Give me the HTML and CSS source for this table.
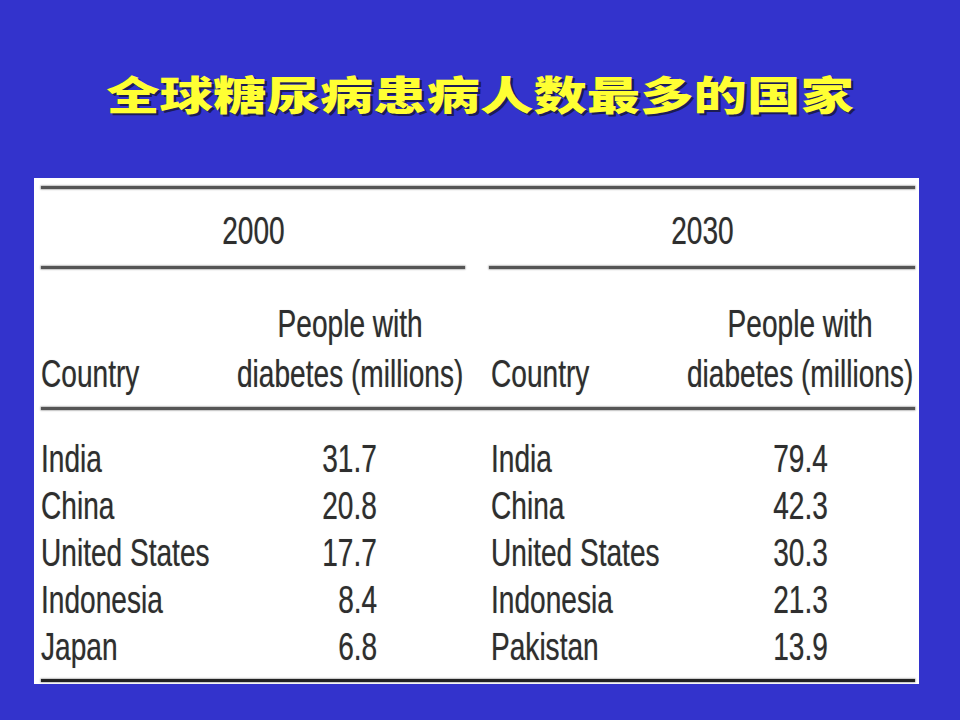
FILE: index.html
```html
<!DOCTYPE html>
<html lang="zh-CN">
<head>
<meta charset="utf-8">
<title>全球糖尿病患病人数最多的国家</title>
<link rel="stylesheet" href="styles.css">
</head>
<body>
<div class="slide">
  <h1 class="title"><span class="title-text">全球糖尿病患病人数最多的国家</span></h1>
  <div class="sheet">
    <div class="rule rule-top"></div>
    <div class="halves">
      <div class="half half-left">
        <div class="year"><span class="sx c">2000</span></div>
        <div class="rule rule-year"></div>
        <div class="head">
          <div class="cell country"><span class="sx l">Country</span></div>
          <div class="cell hval"><span class="sx c">People with<br>diabetes (millions)</span></div>
        </div>
      </div>
      <div class="half half-right">
        <div class="year"><span class="sx c">2030</span></div>
        <div class="rule rule-year"></div>
        <div class="head">
          <div class="cell country"><span class="sx l">Country</span></div>
          <div class="cell hval"><span class="sx c">People with<br>diabetes (millions)</span></div>
        </div>
      </div>
    </div>
    <div class="rule rule-mid"></div>
    <div class="halves body-rows">
      <div class="half half-left">
        <div class="row"><div class="country"><span class="sx l">India</span></div><div class="num"><span class="sx r">31.7</span></div></div>
        <div class="row"><div class="country"><span class="sx l">China</span></div><div class="num"><span class="sx r">20.8</span></div></div>
        <div class="row"><div class="country"><span class="sx l">United States</span></div><div class="num"><span class="sx r">17.7</span></div></div>
        <div class="row"><div class="country"><span class="sx l">Indonesia</span></div><div class="num"><span class="sx r">8.4</span></div></div>
        <div class="row"><div class="country"><span class="sx l">Japan</span></div><div class="num"><span class="sx r">6.8</span></div></div>
      </div>
      <div class="half half-right">
        <div class="row"><div class="country"><span class="sx l">India</span></div><div class="num"><span class="sx r">79.4</span></div></div>
        <div class="row"><div class="country"><span class="sx l">China</span></div><div class="num"><span class="sx r">42.3</span></div></div>
        <div class="row"><div class="country"><span class="sx l">United States</span></div><div class="num"><span class="sx r">30.3</span></div></div>
        <div class="row"><div class="country"><span class="sx l">Indonesia</span></div><div class="num"><span class="sx r">21.3</span></div></div>
        <div class="row"><div class="country"><span class="sx l">Pakistan</span></div><div class="num"><span class="sx r">13.9</span></div></div>
      </div>
    </div>
    <div class="rule rule-bottom"></div>
  </div>
</div>
</body>
</html>
```

FILE: styles.css
```css
html, body {
  margin: 0;
  padding: 0;
}
body {
  width: 960px;
  height: 720px;
  background: #3333cc;
  overflow: hidden;
}
.slide {
  width: 960px;
  height: 720px;
  padding-top: 73px;
  box-sizing: border-box;
}
.title {
  margin: 0;
  height: 40px;
  line-height: 40px;
  text-align: center;
  font-family: "Noto Sans CJK SC", "Noto Sans CJK TC", sans-serif;
  font-weight: 900;
  font-size: 40px;
  color: #ffff33;
}
.title-text {
  display: inline-block;
  transform: scaleX(1.335);
  transform-origin: 50% 50%;
  text-shadow: 2px 2px 0 #1c1c55;
}
.sheet {
  margin-top: 65px;
  margin-left: 34px;
  width: 885px;
  height: 506px;
  background: #ffffff;
  box-sizing: border-box;
  padding: 0 4px 0 7px;
  overflow: hidden;
  font-family: "Liberation Sans", Arial, sans-serif;
  font-size: 39px;
  color: #2e2e2e;
}
.rule {
  height: 3px;
  background: #555555;
  box-shadow: 0 0 1.5px 0.5px #9a9a9a;
}
.rule-top {
  margin-top: 8px;
}
.halves {
  display: flex;
  gap: 24px;
}
.half {
  min-width: 0;
}
.half-left {
  width: 424px;
  flex: none;
}
.half-right {
  flex: 1;
}
.year {
  margin-top: 18px;
  height: 47px;
  line-height: 47px;
  display: flex;
  justify-content: center;
}
.rule-year {
  margin-top: 12px;
}
.head {
  margin-top: 30px;
  display: grid;
  grid-template-columns: minmax(0, 1fr) 230px;
  line-height: 50px;
  height: 100px;
}
.head .country {
  align-self: end;
}
.hval {
  display: flex;
  justify-content: center;
  text-align: center;
}
.half-right .country {
  padding-left: 2px;
}
.rule-mid {
  margin-top: 8px;
}
.body-rows {
  padding-top: 25px;
}
.row {
  display: grid;
  grid-template-columns: minmax(0, 1fr) 230px;
  height: 47px;
  line-height: 47px;
}
.num {
  display: flex;
  justify-content: flex-end;
  padding-right: 88px;
}
.half-right .num {
  padding-right: 87px;
}
.country {
  white-space: nowrap;
  min-width: 0;
}
.sx {
  display: inline-block;
  white-space: nowrap;
  transform: scaleX(0.72);
  text-shadow: 0 0 1px rgba(0, 0, 0, 0.35);
}
.sx.l { transform-origin: 0 50%; }
.sx.c { transform-origin: 50% 50%; }
.sx.r { transform-origin: 100% 50%; }
.rule-bottom {
  margin-top: 9px;
  background: #222222;
}
```
